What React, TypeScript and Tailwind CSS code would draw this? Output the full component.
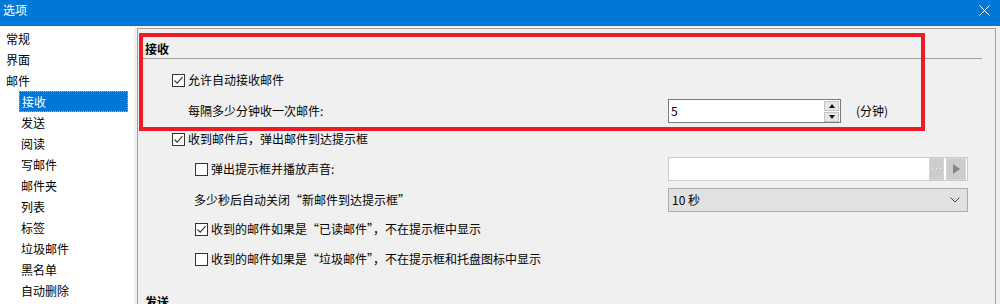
import React from "react";

const navItems: { label: string; sub?: boolean; active?: boolean }[] = [
  { label: "常规" },
  { label: "界面" },
  { label: "邮件" },
  { label: "接收", sub: true, active: true },
  { label: "发送", sub: true },
  { label: "阅读", sub: true },
  { label: "写邮件", sub: true },
  { label: "邮件夹", sub: true },
  { label: "列表", sub: true },
  { label: "标签", sub: true },
  { label: "垃圾邮件", sub: true },
  { label: "黑名单", sub: true },
  { label: "自动删除", sub: true },
];

function Check({ on }: { on?: boolean }) {
  return (
    <span className="w-[13px] h-[13px] border border-[#333333] bg-white flex items-center justify-center shrink-0">
      {on && (
        <svg width="11" height="11" viewBox="0 0 11 11">
          <path d="M1.5 5.5 L4.2 8.2 L9.5 2.2" stroke="#333333" strokeWidth="1.1" fill="none" />
        </svg>
      )}
    </span>
  );
}

export default function App() {
  return (
    <div className="relative w-[1000px] h-[304px] overflow-hidden bg-[#f0f0f0] text-[12px] leading-[16px] text-black font-['Noto_Sans_CJK_SC',sans-serif]">
      {/* title bar */}
      <div className="h-[26px] bg-[#0078d7] text-white flex items-start justify-between pt-[2px]">
        <span className="pl-[3px] text-[12px] leading-[16px]">选项</span>
        <svg width="11" height="11" viewBox="0 0 11 11" className="mr-[10px] mt-[3px]">
          <path d="M0.5 0.5 L10.5 10.5 M10.5 0.5 L0.5 10.5" stroke="white" strokeWidth="1" />
        </svg>
      </div>

      <div className="flex">
        {/* left tree */}
        <div className="w-[134px] h-[300px] mt-[1px] bg-white pt-[1px]">
          {navItems.map((it) => (
            <div key={it.label} className={`h-[21px] flex items-center ${it.sub ? "pl-[19px]" : "pl-[6px]"}`}>
              {it.active ? (
                <span className="w-[109px] h-[21px] flex items-center pl-[2px] bg-[#0078d7] text-white border border-dotted border-[#f5a040]">
                  {it.label}
                </span>
              ) : (
                <span className={it.sub ? "pl-[2px]" : ""}>{it.label}</span>
              )}
            </div>
          ))}
        </div>

        {/* right settings panel */}
        <div className="ml-[3px] mt-[2px] w-[859px] h-[300px] border-l border-t border-r border-[#a0a0a0] bg-[#f0f0f0]">
          <div className="mt-[11px] h-[18px] pl-[7px] flex items-center font-bold">接收</div>
          <div className="ml-[5px] w-[839px] h-px bg-[#a0a0a0]"></div>

          <div className="mt-[9px] h-[24px] pl-[34px] flex items-center gap-[3px]">
            <Check on />
            <span>允许自动接收邮件</span>
          </div>

          <div className="mt-[7px] h-[24px] flex items-center">
            <div className="w-[530px] pl-[50px]">每隔多少分钟收一次邮件:</div>
            <div className="w-[173px] h-[24px] border border-[#7a7a7a] bg-white flex items-center justify-between">
              <span className="pl-[2px] leading-[20px]">5</span>
              <div className="flex flex-col gap-px mr-[1px]">
                <span className="w-[15px] h-[10px] bg-[#e6e6e6] border border-[#c4c4c4] flex items-center justify-center">
                  <svg width="6" height="4" viewBox="0 0 6 4"><path d="M0 4 L3 0 L6 4 Z" fill="#111" /></svg>
                </span>
                <span className="w-[15px] h-[10px] bg-[#e6e6e6] border border-[#c4c4c4] flex items-center justify-center">
                  <svg width="6" height="4" viewBox="0 0 6 4"><path d="M0 0 L3 4 L6 0 Z" fill="#111" /></svg>
                </span>
              </div>
            </div>
            <span className="ml-[15px]">(分钟)</span>
          </div>

          <div className="mt-[4px] h-[24px] pl-[34px] flex items-center gap-[3px]">
            <Check on />
            <span>收到邮件后，弹出邮件到达提示框</span>
          </div>

          <div className="mt-[6px] h-[24px] flex items-center">
            <div className="w-[530px] pl-[57px] flex items-center gap-[3px]">
              <Check />
              <span>弹出提示框并播放声音:</span>
            </div>
            <div className="w-[300px] h-[24px] border border-[#cccccc] bg-white flex items-center justify-end gap-[2px] pr-[1px]">
              <span className="w-[15px] h-[22px] bg-[#cccccc] border border-[#d6d6d6] flex items-center justify-center">
                <svg width="9" height="2" viewBox="0 0 9 2">
                  <rect x="0" y="0" width="1" height="1" fill="#f4f4f4" />
                  <rect x="4" y="0" width="1" height="1" fill="#f4f4f4" />
                  <rect x="8" y="0" width="1" height="1" fill="#f4f4f4" />
                </svg>
              </span>
              <span className="w-[20px] h-[22px] bg-[#cccccc] border border-[#d6d6d6] flex items-center justify-center">
                <svg width="7" height="10" viewBox="0 0 7 10"><path d="M0 0 L7 5 L0 10 Z" fill="#858585" /></svg>
              </span>
            </div>
          </div>

          <div className="mt-[7px] h-[24px] flex items-center">
            <div className="w-[530px] pl-[56px]">多少秒后自动关闭“新邮件到达提示框”</div>
            <div className="w-[300px] h-[24px] border border-[#adadad] bg-[#e1e1e1] flex items-center justify-between">
              <span className="pl-[3px]">10 秒</span>
              <svg width="10" height="6" viewBox="0 0 10 6" className="mr-[7px]">
                <path d="M0.5 0.5 L5 5 L9.5 0.5" stroke="#444" strokeWidth="1" fill="none" />
              </svg>
            </div>
          </div>

          <div className="mt-[5px] h-[24px] pl-[57px] flex items-center gap-[3px]">
            <Check on />
            <span>收到的邮件如果是“已读邮件”，不在提示框中显示</span>
          </div>

          <div className="mt-[6px] h-[24px] pl-[57px] flex items-center gap-[3px]">
            <Check />
            <span>收到的邮件如果是“垃圾邮件”，不在提示框和托盘图标中显示</span>
          </div>

          <div className="mt-[22px] h-[18px] pl-[7px] flex items-center font-bold">发送</div>
        </div>
      </div>

      {/* red annotation */}
      <div className="absolute left-[139px] top-[33px] w-[786px] h-[98px] border-4 border-[#ed1c24] pointer-events-none"></div>
    </div>
  );
}
